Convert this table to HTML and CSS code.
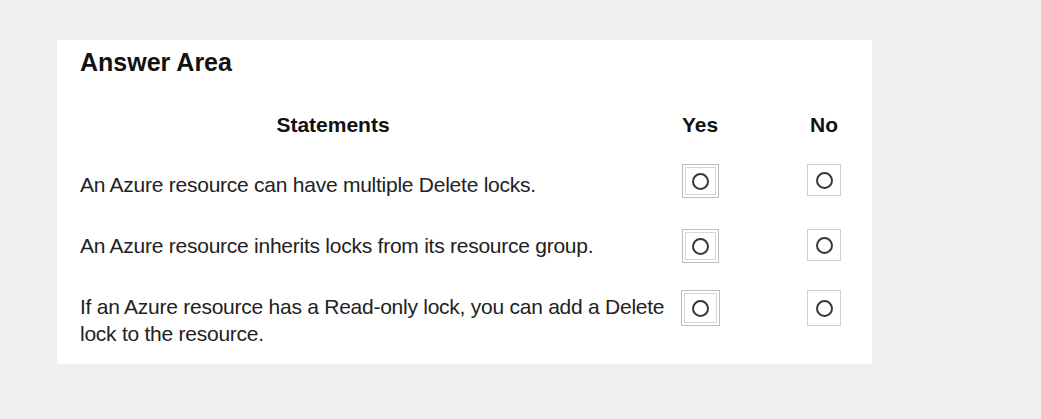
FILE: index.html
```html
<!DOCTYPE html>
<html>
<head>
<meta charset="utf-8">
<link rel="stylesheet" href="styles.css">
</head>
<body>
<div class="panel">
  <h1 class="title">Answer Area</h1>
  <div class="grid">
    <div class="head head-stmt">Statements</div>
    <div class="head">Yes</div>
    <div class="head col-no">No</div>

    <div class="stmt stmt-first">An Azure resource can have multiple Delete locks.</div>
    <div class="cell"><span class="box box-yes"><span class="radio"></span></span></div>
    <div class="cell col-no"><span class="box"><span class="radio"></span></span></div>

    <div class="stmt">An Azure resource inherits locks from its resource group.</div>
    <div class="cell"><span class="box box-yes"><span class="radio"></span></span></div>
    <div class="cell col-no"><span class="box"><span class="radio"></span></span></div>

    <div class="stmt">If an Azure resource has a Read-only lock, you can add a Delete lock to the resource.</div>
    <div class="cell"><span class="box box-yes box-tall"><span class="radio"></span></span></div>
    <div class="cell col-no"><span class="box box-tall-no"><span class="radio"></span></span></div>
  </div>
</div>
</body>
</html>
```

FILE: styles.css
```css
html, body {
  margin: 0;
  padding: 0;
}
body {
  background: #efefef;
  font-family: "Liberation Sans", Arial, sans-serif;
  color: #1a1a1a;
  padding: 40px 0 0 57px;
}
.panel {
  width: 815px;
  height: 324px;
  background: #ffffff;
  box-sizing: border-box;
  padding: 8px 0 0 23px;
}
.title {
  margin: 0;
  font-size: 25px;
  font-weight: bold;
  line-height: 28px;
  color: #111;
}
.grid {
  display: grid;
  grid-template-columns: 600px 40px 84px 40px;
  grid-template-rows: 51px 65px 61px auto;
  margin-top: 37px;
}
.col-no {
  grid-column: 4;
}
.head {
  font-size: 21px;
  font-weight: bold;
  line-height: 24px;
  text-align: center;
  color: #111;
  white-space: nowrap;
  justify-self: center;
}
.head-stmt {
  width: 506px;
  justify-self: start;
}
.stmt {
  font-size: 21px;
  line-height: 27px;
  letter-spacing: -0.25px;
  color: #222;
  padding-right: 10px;
  padding-top: 3px;
  align-self: start;
}
.stmt-first {
  padding-top: 7px;
}
.cell {
  display: flex;
  justify-content: center;
  align-items: flex-start;
}
.box {
  width: 34px;
  height: 32px;
  box-sizing: border-box;
  border: 1px solid #cfcfcf;
  display: flex;
  align-items: center;
  justify-content: center;
}
.box-yes {
  width: 37px;
  height: 34px;
  border-color: #bdbdbd;
  box-shadow: inset 0 0 0 2px #ffffff, inset 0 0 0 3px #d8d8d8;
}
.box-tall {
  width: 39px;
  height: 36px;
}
.box-tall-no {
  height: 36px;
}
.radio {
  width: 17px;
  height: 17px;
  box-sizing: border-box;
  border: 2px solid #383838;
  border-radius: 50%;
}
```
